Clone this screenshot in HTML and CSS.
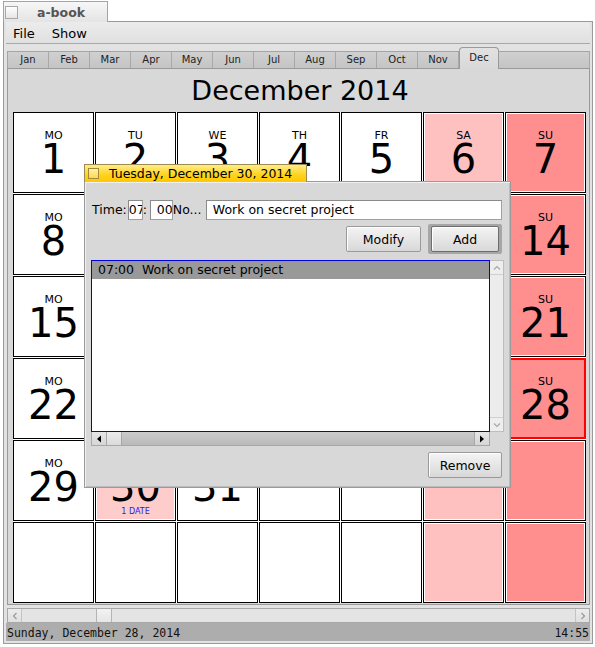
FILE: index.html
```html
<!DOCTYPE html>
<html lang="en">
<head>
  <meta charset="UTF-8">
  <title>a-book</title>
  <link rel="stylesheet" href="styles.css">
</head>
<body>

  <!-- window tab -->
  <div class="win-tab">
    <span class="close-box"></span>
    <span class="win-title">a-book</span>
  </div>

  <div class="win">
    <div class="menubar">
      <span>File</span>
      <span>Show</span>
    </div>

    <div class="month-view">
      <div class="months">
        <span class="month first">Jan</span>
        <span class="month">Feb</span>
        <span class="month">Mar</span>
        <span class="month">Apr</span>
        <span class="month">May</span>
        <span class="month">Jun</span>
        <span class="month">Jul</span>
        <span class="month">Aug</span>
        <span class="month">Sep</span>
        <span class="month">Oct</span>
        <span class="month">Nov</span>
        <span class="month current">Dec</span>
        <span class="months-fill"></span>
      </div>

      <div class="page">
        <h1 class="page-title">December 2014</h1>
        <div class="days">
          <!-- week 1 -->
          <div class="day"><div class="wd">MO</div><div class="num">1</div></div>
          <div class="day"><div class="wd">TU</div><div class="num">2</div></div>
          <div class="day"><div class="wd">WE</div><div class="num">3</div></div>
          <div class="day"><div class="wd">TH</div><div class="num">4</div></div>
          <div class="day"><div class="wd">FR</div><div class="num">5</div></div>
          <div class="day sat"><div class="wd">SA</div><div class="num">6</div></div>
          <div class="day sun"><div class="wd">SU</div><div class="num">7</div></div>
          <!-- week 2 -->
          <div class="day"><div class="wd">MO</div><div class="num">8</div></div>
          <div class="day"><div class="wd">TU</div><div class="num">9</div></div>
          <div class="day"><div class="wd">WE</div><div class="num">10</div></div>
          <div class="day"><div class="wd">TH</div><div class="num">11</div></div>
          <div class="day"><div class="wd">FR</div><div class="num">12</div></div>
          <div class="day sat"><div class="wd">SA</div><div class="num">13</div></div>
          <div class="day sun"><div class="wd">SU</div><div class="num">14</div></div>
          <!-- week 3 -->
          <div class="day"><div class="wd">MO</div><div class="num">15</div></div>
          <div class="day"><div class="wd">TU</div><div class="num">16</div></div>
          <div class="day"><div class="wd">WE</div><div class="num">17</div></div>
          <div class="day"><div class="wd">TH</div><div class="num">18</div></div>
          <div class="day"><div class="wd">FR</div><div class="num">19</div></div>
          <div class="day sat"><div class="wd">SA</div><div class="num">20</div></div>
          <div class="day sun"><div class="wd">SU</div><div class="num">21</div></div>
          <!-- week 4 -->
          <div class="day"><div class="wd">MO</div><div class="num">22</div></div>
          <div class="day"><div class="wd">TU</div><div class="num">23</div></div>
          <div class="day"><div class="wd">WE</div><div class="num">24</div></div>
          <div class="day"><div class="wd">TH</div><div class="num">25</div></div>
          <div class="day"><div class="wd">FR</div><div class="num">26</div></div>
          <div class="day sat"><div class="wd">SA</div><div class="num">27</div></div>
          <div class="day sun today"><div class="wd">SU</div><div class="num">28</div></div>
          <!-- week 5 -->
          <div class="day"><div class="wd">MO</div><div class="num">29</div></div>
          <div class="day marked"><div class="wd">TU</div><div class="num">30</div><div class="dates">1 DATE</div></div>
          <div class="day"><div class="wd">WE</div><div class="num">31</div></div>
          <div class="day"></div>
          <div class="day"></div>
          <div class="day sat"></div>
          <div class="day sun"></div>
          <!-- week 6 -->
          <div class="day"></div>
          <div class="day"></div>
          <div class="day"></div>
          <div class="day"></div>
          <div class="day"></div>
          <div class="day sat"></div>
          <div class="day sun"></div>
        </div>
      </div>
    </div>

    <div class="hscroll">
      <span class="sb-arrow">
        <svg width="6" height="8" viewBox="0 0 6 8"><polyline points="4.5,1 1.5,4 4.5,7" fill="none" stroke="#9a9a9a" stroke-width="1.2"/></svg>
      </span>
      <span class="sb-thumb"></span>
      <span class="sb-track"></span>
      <span class="sb-arrow">
        <svg width="6" height="8" viewBox="0 0 6 8"><polyline points="1.5,1 4.5,4 1.5,7" fill="none" stroke="#9a9a9a" stroke-width="1.2"/></svg>
      </span>
    </div>

    <div class="status">
      <span>Sunday, December 28, 2014</span>
      <span>14:55</span>
    </div>
  </div>

  <!-- date editor window -->
  <div class="dlg">
    <div class="dlg-tab"><span class="dlg-icon"></span>Tuesday, December 30, 2014</div>
    <div class="dlg-body">
      <div class="entry-row">
        <span class="lbl">Time:</span>
        <span class="field hh">07</span>
        <span class="colon">:</span>
        <span class="field mm">00</span>
        <span class="lbl no">No...</span>
        <span class="field text">Work on secret project</span>
      </div>

      <div class="btn-row">
        <span class="btn modify">Modify</span>
        <span class="btn-default"><span class="btn add">Add</span></span>
      </div>

      <div class="list">
        <div class="list-box">
          <div class="list-item sel">07:00&nbsp;&nbsp;Work on secret project</div>
        </div>
        <div class="vscroll">
          <span class="vs-arrow">
            <svg width="8" height="6" viewBox="0 0 8 6"><polyline points="1,4.5 4,1.5 7,4.5" fill="none" stroke="#a8a8a8" stroke-width="1.2"/></svg>
          </span>
          <span class="vs-track"></span>
          <span class="vs-arrow">
            <svg width="8" height="6" viewBox="0 0 8 6"><polyline points="1,1.5 4,4.5 7,1.5" fill="none" stroke="#a8a8a8" stroke-width="1.2"/></svg>
          </span>
        </div>
        <div class="lscroll">
          <span class="ls-arrow">
            <svg width="6" height="8" viewBox="0 0 6 8"><polygon points="5,0.5 1,4 5,7.5" fill="#000"/></svg>
          </span>
          <span class="ls-thumb"></span>
          <span class="ls-track"></span>
          <span class="ls-arrow">
            <svg width="6" height="8" viewBox="0 0 6 8"><polygon points="1,0.5 5,4 1,7.5" fill="#000"/></svg>
          </span>
        </div>
        <span class="corner"></span>
      </div>

      <div class="btn-row bottom">
        <span class="btn remove">Remove</span>
      </div>
    </div>
  </div>

</body>
</html>
```

FILE: styles.css
```css
* {
  box-sizing: border-box;
}

body {
  margin: 0;
  width: 595px;
  height: 647px;
  overflow: hidden;
  position: relative;
  background: #fff;
  font-family: 'DejaVu Sans', 'Liberation Sans', sans-serif;
  font-size: 12.5px;
  color: #000;
}

/* ---------- main window ---------- */

.win-tab {
  position: relative;
  z-index: 1;
  display: flex;
  align-items: center;
  width: 105px;
  height: 21px;
  margin: 1px 0 -1px 3px;
  border: 1px solid #a4a4a4;
  border-bottom: none;
  background: linear-gradient(#f7f7f7, #e4e4e4);
}

.close-box {
  width: 13px;
  height: 13px;
  margin-left: 1px;
  border: 1px solid #a8a8a8;
  background: linear-gradient(#ffffff, #e6e6e6);
}

.win-title {
  margin-left: 19px;
  font-weight: bold;
  color: #555;
}

.win {
  display: flex;
  flex-direction: column;
  width: 590px;
  height: 623px;
  margin-left: 3px;
  padding: 0 2px 2px;
  border: 1px solid #9a9a9a;
  background: #e2e2e2;
}

.menubar {
  display: flex;
  gap: 17px;
  height: 22px;
  padding: 3px 0 0 7px;
  border-bottom: 1px solid #a8a8a8;
  background: linear-gradient(#ececec, #e0e0e0);
  font-size: 13px;
  line-height: 18px;
}

.month-view {
  margin: 3px 0 0 1px;
}

.months {
  display: flex;
  align-items: flex-end;
  height: 21px;
}

.month, .months-fill {
  height: 17px;
  border-top: 1px solid #a4a4a4;
  border-right: 1px solid #a8a8a8;
  background: linear-gradient(#d0d0d0, #c4c4c4);
}

.month {
  width: 41px;
  font-size: 10px;
  line-height: 16px;
  text-align: center;
  color: #222;
}

.month.first {
  width: 42px;
  border-left: 1px solid #a4a4a4;
}

.month.current {
  position: relative;
  z-index: 1;
  width: 40px;
  height: 22px;
  margin-bottom: -1px;
  border: 1px solid #9a9a9a;
  border-bottom: none;
  border-radius: 4px 4px 0 0;
  background: linear-gradient(#e2e2e2, #d8d8d8);
  line-height: 19px;
}

.months-fill {
  flex: 1;
}

.page {
  height: 537px;
  padding: 0 2px 1px 5px;
  border: 1px solid #9a9a9a;
  background: #d8d8d8;
}

.page-title {
  margin: 0;
  height: 43px;
  font-size: 27px;
  font-weight: normal;
  line-height: 43px;
  text-align: center;
}

.days {
  display: grid;
  grid-template-columns: repeat(7, 81px);
  grid-auto-rows: 81px;
  gap: 1px;
  width: 573px;
  background: #fff;
}

.day {
  padding-top: 16px;
  border: 1px solid #000;
  background: #fff;
  text-align: center;
}

.day.sat {
  background: #ffc0c0;
  box-shadow: inset 0 0 0 1px #fff;
}

.day.sun {
  background: #ff8e8e;
  box-shadow: inset 0 0 0 1px #fff;
}

.day.marked {
  background: #ffcccc;
  box-shadow: inset 0 0 0 1px #fff;
}

.day.today {
  border-color: #ff0000;
  box-shadow: inset 0 0 0 1px #ff0000;
}

.wd {
  font-size: 11px;
  line-height: 13px;
}

.num {
  font-size: 40px;
  line-height: 34px;
}

.dates {
  margin-top: 3px;
  font-size: 8px;
  line-height: 10px;
  color: #1a1aff;
}

/* bottom scroll bar */
.hscroll {
  display: flex;
  height: 15px;
  margin: 3px 0 0 1px;
  border: 1px solid #a8a8a8;
  background: #e4e4e4;
}

.sb-arrow {
  display: flex;
  align-items: center;
  justify-content: center;
  width: 14px;
  border-right: 1px solid #c4c4c4;
  background: linear-gradient(#ececec, #e0e0e0);
}

.sb-arrow:last-child {
  border-right: none;
  border-left: 1px solid #c4c4c4;
}

.sb-thumb {
  width: 16px;
  margin-left: 74px;
  border-left: 1px solid #b4b4b4;
  border-right: 1px solid #b4b4b4;
  background: linear-gradient(#f2f2f2, #e6e6e6);
}

.sb-track {
  flex: 1;
}

.status {
  display: flex;
  justify-content: space-between;
  height: 18px;
  padding: 3px 1px 0 1px;
  background: #adadad;
  font-family: 'DejaVu Sans Mono', 'Liberation Mono', monospace;
  font-size: 11.5px;
  line-height: 15px;
  color: #111;
}

/* ---------- date editor ---------- */

.dlg {
  position: absolute;
  left: 84px;
  top: 164px;
  width: 427px;
}

.dlg-tab {
  position: relative;
  z-index: 1;
  display: flex;
  align-items: center;
  width: 223px;
  height: 18px;
  margin-bottom: -1px;
  border: 1px solid #9c8c50;
  border-bottom: none;
  background: linear-gradient(#ffec8a, #ffd21a 60%, #ffc800);
  line-height: 17px;
}

.dlg-icon {
  width: 11px;
  height: 11px;
  margin: 0 10px 0 3px;
  border: 1px solid #a08a3c;
  background: linear-gradient(#fff1a8, #ffd84a);
}

.dlg-body {
  display: flex;
  flex-direction: column;
  height: 307px;
  padding: 18px 6px 0 6px;
  border: 1px solid #9a9a9a;
  background: #d8d8d8;
  box-shadow: inset 1px 1px #f0f0f0, inset -1px -1px #bcbcbc;
}

.entry-row {
  display: flex;
  align-items: center;
  height: 20px;
  margin-right: 2px;
  line-height: 18px;
}

.lbl {
  margin-left: 1px;
  white-space: nowrap;
}

.lbl.no {
  width: 29px;
  margin: 0 4px 0 0;
  overflow: hidden;
}

.field {
  height: 20px;
  overflow: hidden;
  white-space: nowrap;
  border: 1px solid #a0a0a0;
  border-top-color: #8a8a8a;
  border-left-color: #8a8a8a;
  background: #fff;
}

.field.hh {
  width: 15px;
  margin-left: 1px;
}

.colon {
  width: 7px;
  text-align: left;
}

.field.mm {
  width: 23px;
  padding-left: 6px;
}

.field.text {
  flex: 1;
  padding-left: 6px;
}

.btn-row {
  display: flex;
  justify-content: flex-end;
  align-items: center;
  gap: 7px;
  height: 30px;
  margin: 4px 2px 0 0;
}

.btn {
  display: flex;
  align-items: center;
  justify-content: center;
  height: 26px;
  border: 1px solid #9a9a9a;
  border-radius: 2px;
  background: linear-gradient(#f4f4f4, #e6e6e6 50%, #d8d8d8);
  box-shadow: inset 1px 1px #fff;
}

.btn.modify {
  width: 75px;
}

.btn-default {
  padding: 2px 3px;
  border-radius: 2px;
  background: #a6a6a6;
}

.btn.add {
  width: 68px;
  border-color: #6e6e6e;
}

.btn.remove {
  width: 74px;
  height: 26px;
}

.btn-row.bottom {
  height: 26px;
  margin-top: 6px;
}

.list {
  display: grid;
  grid-template-columns: 399px 14px;
  grid-template-rows: 172px 14px;
  margin-top: 6px;
}

.list-box {
  border: 1px solid #0000e0;
  background: #fff;
}

.list-item {
  height: 18px;
  padding-left: 6px;
  line-height: 18px;
  white-space: nowrap;
}

.list-item.sel {
  background: #999;
}

.vscroll {
  display: flex;
  flex-direction: column;
  border: 1px solid #bdbdbd;
  border-left: none;
  background: #ececec;
}

.vs-arrow {
  display: flex;
  align-items: center;
  justify-content: center;
  height: 14px;
  border-bottom: 1px solid #d0d0d0;
  background: #eeeeee;
}

.vs-arrow:last-child {
  border-bottom: none;
  border-top: 1px solid #d0d0d0;
}

.vs-track {
  flex: 1;
}

.lscroll {
  display: flex;
  border: 1px solid #a8a8a8;
  border-top: none;
  background: linear-gradient(#cbcbcb, #b9b9b9);
}

.ls-arrow {
  display: flex;
  align-items: center;
  justify-content: center;
  width: 15px;
  border-right: 1px solid #a8a8a8;
  background: linear-gradient(#e6e6e6, #d6d6d6);
}

.ls-arrow:last-child {
  border-right: none;
  border-left: 1px solid #a8a8a8;
}

.ls-thumb {
  width: 15px;
  border-right: 1px solid #a8a8a8;
  background: linear-gradient(#ececec, #dadada);
}

.ls-track {
  flex: 1;
}
```
